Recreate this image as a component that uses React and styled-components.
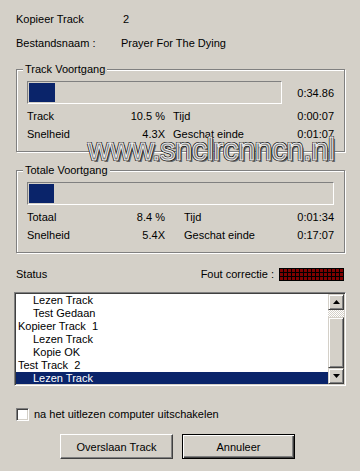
import React from "react";
import styled, { createGlobalStyle, css } from "styled-components";

const GlobalStyle = createGlobalStyle`
  html, body {
    margin: 0;
    padding: 0;
    background: #d4d0c8;
  }

  body {
    font-family: "Liberation Sans", Arial, sans-serif;
    font-size: 11px;
    color: #000;
  }
`;

const raised = css`
  background: #d4d0c8;
  border: 1px solid;
  border-color: #fff #404040 #404040 #fff;
  box-shadow: inset -1px -1px 0 #808080;
`;

const sunken = css`
  border: 1px solid;
  border-color: #808080 #fff #fff #808080;
  box-shadow: inset 1px 1px 0 #404040, inset -1px -1px 0 #d4d0c8;
`;

const Dialog = styled.div`
  position: relative;
  width: 360px;
  height: 471px;
  box-sizing: border-box;
  padding: 13px 15px 0 16px;
  background: #d4d0c8;
  overflow: hidden;
`;

const InfoRow = styled.div`
  display: grid;
  grid-template-columns: 105px 1fr;
  height: 13px;
  line-height: 13px;
  margin-top: ${(p) => p.$top || 0}px;
  white-space: nowrap;
`;

const InfoValue = styled.span`
  padding-left: ${(p) => p.$shift || 0}px;
`;

const Group = styled.div`
  position: relative;
  margin-top: ${(p) => p.$top}px;
  border: 1px solid #808080;
  box-shadow: inset 1px 1px 0 #fff, 1px 1px 0 #fff;
  padding: 11px 10px 8px 10px;
`;

const Legend = styled.span`
  position: absolute;
  top: -7px;
  left: 6px;
  padding: 0 2px;
  line-height: 13px;
  background: #d4d0c8;
  white-space: nowrap;
`;

const ProgressRow = styled.div`
  display: flex;
  align-items: center;
  justify-content: space-between;
  height: 23px;
`;

const Bar = styled.div`
  width: ${(p) => p.$width}px;
  height: 23px;
  box-sizing: border-box;
  border: 1px solid;
  border-color: #808080 #fff #fff #808080;
  padding: 1px;
`;

const Fill = styled.div`
  height: 100%;
  background: #0a246a;
`;

const Stats = styled.div`
  margin-top: 3px;
`;

const StatRow = styled.div`
  display: grid;
  grid-template-columns: 80px 58px 1fr auto;
  height: 18px;
  line-height: 18px;
  white-space: nowrap;
`;

const Value = styled.span`
  text-align: right;
`;

const SubLabel = styled.span`
  padding-left: ${(p) => p.$gap}px;
`;

const StatusRow = styled.div`
  display: flex;
  align-items: center;
  justify-content: space-between;
  height: 14px;
  margin-top: 14px;
`;

const Fout = styled.div`
  display: flex;
  align-items: center;
  gap: 5px;
  margin-right: 1px;
`;

const Led = styled.div`
  display: grid;
  grid-template-columns: repeat(16, 3px);
  grid-template-rows: repeat(3, 3px);
  gap: 1px;
  padding: 1px;
  background: #000;
`;

const LedCell = styled.span`
  background: #800000;
`;

const ListBox = styled.div`
  ${sunken};
  display: flex;
  width: 332px;
  height: 94px;
  box-sizing: border-box;
  margin: 11px 0 0 -2px;
  padding: 1px;
  background: #fff;
`;

const Items = styled.div`
  flex: 1;
  overflow: hidden;
  background: #fff;
`;

const Item = styled.div`
  height: 13px;
  line-height: 13px;
  padding-left: ${(p) => (p.$indent ? 17 : 2)}px;
  white-space: pre;
  ${(p) =>
    p.$selected &&
    css`
      background: #0a246a;
      color: #fff;
    `}
`;

const ScrollBar = styled.div`
  display: flex;
  flex-direction: column;
  width: 16px;
`;

const ScrollButton = styled.div`
  ${raised};
  border-color: #d4d0c8 #404040 #404040 #d4d0c8;
  box-shadow: inset 1px 1px 0 #fff, inset -1px -1px 0 #808080;
  box-sizing: border-box;
  height: ${(p) => p.$height || 16}px;
  display: flex;
  align-items: center;
  justify-content: center;
`;

const Track = styled.div`
  height: 7px;
  background-color: #d4d0c8;
  background-image: conic-gradient(#fff 25%, #d4d0c8 0 50%, #fff 0 75%, #d4d0c8 0);
  background-size: 2px 2px;
`;

const CheckRow = styled.label`
  display: flex;
  align-items: center;
  gap: 5px;
  margin-top: 22px;
  height: 13px;
  line-height: 13px;
`;

const CheckBox = styled.span`
  ${sunken};
  width: 13px;
  height: 13px;
  box-sizing: border-box;
  background: #fff;
`;

const Buttons = styled.div`
  display: flex;
  gap: 9px;
  margin-top: 13px;
  padding-left: 44px;
`;

const Button = styled.button`
  ${raised};
  width: 113px;
  height: 25px;
  box-sizing: border-box;
  padding: 0;
  font: inherit;
  color: #000;
  ${(p) =>
    p.$default &&
    css`
      border-color: #000;
      box-shadow: inset 1px 1px 0 #fff, inset -1px -1px 0 #404040,
        inset -2px -2px 0 #808080;
    `}
`;

const Watermark = styled.span`
  position: absolute;
  left: 88px;
  top: 134px;
  font-size: 31px;
  line-height: 31px;
  letter-spacing: -0.5px;
  color: #7c7c7c;
  -webkit-text-stroke: 1px #f0f0f0;
  text-shadow: 1px 1px 0 #111, -1px -1px 0 #111, 1px -1px 0 #111,
    -1px 1px 0 #111, 2px 2px 0 #666;
  white-space: nowrap;
  pointer-events: none;
`;

function Arrow({ down }) {
  return (
    <svg width="7" height="4" viewBox="0 0 7 4">
      <polygon points={down ? "0,0 7,0 3.5,4" : "3.5,0 7,4 0,4"} fill="#000" />
    </svg>
  );
}

function Progress({ title, top, barWidth, percent, time, gap, rows }) {
  return (
    <Group $top={top}>
      <Legend>{title}</Legend>
      <ProgressRow>
        <Bar $width={barWidth}>
          <Fill style={{ width: `${percent}%` }} />
        </Bar>
        {time && <span>{time}</span>}
      </ProgressRow>
      <Stats>
        {rows.map((r) => (
          <StatRow key={r[0]}>
            <span>{r[0]}</span>
            <Value>{r[1]}</Value>
            <SubLabel $gap={gap}>{r[2]}</SubLabel>
            <Value>{r[3]}</Value>
          </StatRow>
        ))}
      </Stats>
    </Group>
  );
}

const log = [
  { text: "Lezen Track", indent: true },
  { text: "Test Gedaan", indent: true },
  { text: "Kopieer Track  1" },
  { text: "Lezen Track", indent: true },
  { text: "Kopie OK", indent: true },
  { text: "Test Track  2" },
  { text: "Lezen Track", indent: true, selected: true },
];

export default function App() {
  return (
    <>
      <GlobalStyle />
      <Dialog>
        <InfoRow>
          <span>Kopieer Track</span>
          <InfoValue $shift={2}>2</InfoValue>
        </InfoRow>
        <InfoRow $top={11}>
          <span>Bestandsnaam :</span>
          <InfoValue>Prayer For The Dying</InfoValue>
        </InfoRow>

        <Progress
          title="Track Voortgang"
          top={19}
          barWidth={255}
          percent={10.5}
          time="0:34.86"
          gap={8}
          rows={[
            ["Track", "10.5 %", "Tijd", "0:00:07"],
            ["Snelheid", "4.3X", "Geschat einde", "0:01:07"],
          ]}
        />

        <Progress
          title="Totale Voortgang"
          top={18}
          barWidth={307}
          percent={8.4}
          gap={19}
          rows={[
            ["Totaal", "8.4 %", "Tijd", "0:01:34"],
            ["Snelheid", "5.4X", "Geschat einde", "0:17:07"],
          ]}
        />

        <StatusRow>
          <span>Status</span>
          <Fout>
            <span>Fout correctie :</span>
            <Led>
              {Array.from({ length: 48 }, (_, i) => (
                <LedCell key={i} />
              ))}
            </Led>
          </Fout>
        </StatusRow>

        <ListBox>
          <Items>
            {log.map((l, i) => (
              <Item key={i} $indent={l.indent} $selected={l.selected}>
                {l.text}
              </Item>
            ))}
          </Items>
          <ScrollBar>
            <ScrollButton>
              <Arrow />
            </ScrollButton>
            <Track />
            <ScrollButton $height={51} />
            <ScrollButton>
              <Arrow down />
            </ScrollButton>
          </ScrollBar>
        </ListBox>

        <CheckRow>
          <CheckBox />
          <span>na het uitlezen computer uitschakelen</span>
        </CheckRow>

        <Buttons>
          <Button>Overslaan Track</Button>
          <Button $default>Annuleer</Button>
        </Buttons>

        <Watermark>www.snclrcnncn.nl</Watermark>
      </Dialog>
    </>
  );
}
